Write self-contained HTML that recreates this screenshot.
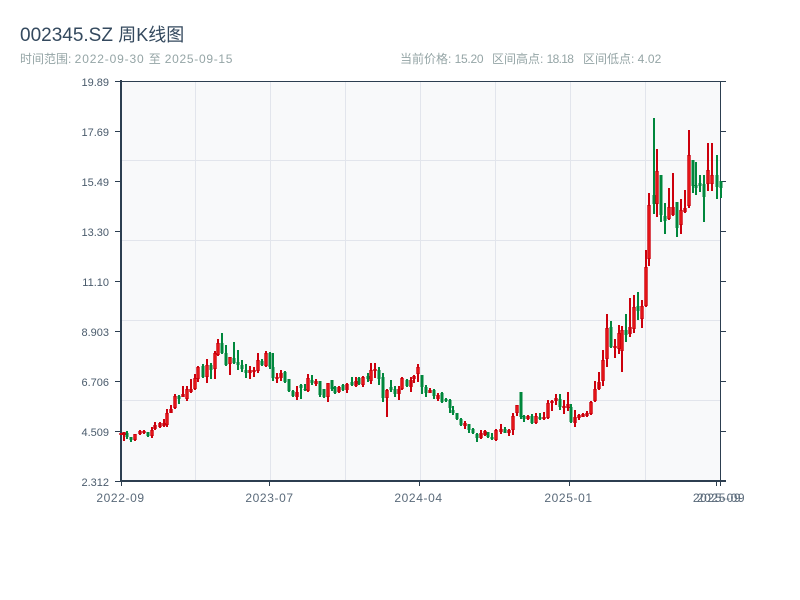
<!DOCTYPE html>
<html lang="zh">
<head>
<meta charset="utf-8">
<title>002345.SZ 周K线图</title>
<style>
html,body{margin:0;padding:0;background:#fff}
body{width:800px;height:600px;overflow:hidden;position:relative;font-family:"Liberation Sans","Noto Sans CJK SC",sans-serif}
svg{position:absolute;left:0;top:0}
text{font-family:"Liberation Sans","Noto Sans CJK SC",sans-serif}
.t{position:absolute;white-space:pre;line-height:1}
.sub{font-size:12px;color:#95a5a6;top:53px}
</style>
</head>
<body>
<div class="t" style="left:20px;top:26px;font-size:18px;color:#34495e"><span style="font-size:19px">002345.SZ </span>周K线图</div>
<div class="t sub" style="left:20px">时间范围: <span style="letter-spacing:.85px">2022-09-30 </span>至<span style="letter-spacing:.7px"> 2025-09-15</span></div>
<div class="t sub" style="left:400px">当前价格: <span style="letter-spacing:-.3px">15.20</span></div>
<div class="t sub" style="left:492px">区间高点: <span style="letter-spacing:-.7px">18.18</span></div>
<div class="t sub" style="left:583px">区间低点: <span style="letter-spacing:.1px">4.02</span></div>
<svg width="800" height="600" viewBox="0 0 800 600">
<rect x="121" y="81" width="600" height="400" fill="#f8f9fa"/>
<path d="M195.5 81V481M270.5 81V481M345.5 81V481M420.5 81V481M495.5 81V481M570.5 81V481M645.5 81V481M121 160.5H721M121 240.5H721M121 320.5H721M121 400.5H721" stroke="#e2e5ec" stroke-width="1" fill="none"/>
<g fill="none" stroke="#2c3e50">
<path d="M121 80V482M121 481H726" stroke-width="2"/>
<path d="M121 81.5H726M720.5 81V481" stroke-width="1"/>
<path d="M115 81.5H121M115 131.5H121M115 181.5H121M115 231.5H121M115 281.5H121M115 331.5H121M115 381.5H121M115 431.5H121M115 481.5H121M721 131.5H726M721 181.5H726M721 231.5H726M721 281.5H726M721 331.5H726M721 381.5H726M721 431.5H726M121.5 481V486M269.5 481V486M419.5 481V486M569.5 481V486M716.5 481V486M720.5 481V486" stroke-width="1"/>
</g>
<!-- green wicks -->
<path fill="none" stroke="#00873c" stroke-width="2" d="M127 431V439M131 437V442M148 432V437M179 395V404M203 364V378M211 363V379M222 333V354M226 345V366M234 342V364M238 350V370M242 360V372M246 364V378M262 359V366M270 352V369M273 353V381M285 371V383M289 379V392M293 390V397M301 384V399M305 384V391M312 375V385M320 381V397M324 389V398M332 380V391M335 386V394M343 384V391M352 377V386M359 377V385M368 373V382M379 367V385M383 373V402M391 380V392M395 386V397M407 379V387M422 375V394M426 385V397M434 389V399M442 392V403M446 398V402M450 399V413M453 406V415M457 413V420M461 418V426M469 424V433M473 428V434M477 433V442M488 432V438M492 433V440M505 427V433M521 392V419M524 415V422M532 414V424M540 413V420M560 394V410M571 404V423M611 321V348M626 314V342M638 292V320M654 118V214M661 175V222M665 203V234M677 202V237M693 160V193M696 162V195M700 175V192M704 175V222M717 155V199M721 181V198"/>
<!-- green bodies -->
<path fill="none" stroke="#00873c" stroke-width="3" d="M127 433V437M131 437V440M148 432V436M179 396V399M203 366V377M211 365V370M222 343V353M226 353V365M234 358V363M238 362V365M242 365V369M246 370V373M262 361V365M270 353V367M273 367V378M285 372V382M289 379V391M293 391V396M301 385V388M305 389V390M312 380V383M320 381V395M324 389V397M332 380V389M335 387V393M343 385V390M352 382V385M359 378V384M368 376V379M379 370V379M383 377V398M391 387V390M395 389V394M407 380V386M422 375V387M426 387V393M434 390V396M442 393V402M446 399V401M450 400V408M453 410V413M457 413V419M461 419V425M469 424V430M473 429V433M477 434V438M488 432V437M492 437V439M505 429V433M521 392V417M524 416V419M532 416V423M540 417V419M560 399V407M571 407V422M611 327V347M626 330V335M638 306V311M654 195V204M661 175V215M665 216V221M677 202V228M693 160V186M696 185V188M700 183V186M704 184V197M717 175V187M721 181V188"/>
<!-- red wicks -->
<path fill="none" stroke="#cc000c" stroke-width="2" d="M121 433V435M124 432V441M135 434V441M140 430V435M144 430V434M152 427V438M155 422V430M160 422V428M164 419V427M167 409V427M171 405V413M175 394V409M183 386V397M187 386V401M191 379V393M195 374V390M198 366V382M207 359V383M215 351V379M218 339V356M230 357V375M250 366V379M254 367V377M258 353V373M266 351V367M277 373V383M281 370V381M297 386V400M308 374V392M316 379V386M328 383V402M339 386V393M347 383V393M356 377V387M363 376V387M371 363V384M375 363V378M387 389V417M399 386V400M402 377V390M411 377V392M414 375V383M418 364V382M430 388V393M438 393V401M465 421V429M481 430V439M485 430V436M496 429V441M501 424V434M509 429V436M513 413V435M517 405V416M528 415V420M536 413V424M544 412V420M548 400V419M552 400V411M556 394V405M564 400V414M568 392V411M575 410V427M579 414V420M583 413V417M587 411V417M591 401V415M595 381V402M599 372V390M603 350V386M607 314V367M615 339V358M619 325V354M622 326V372M630 298V337M634 295V333M642 300V328M646 250V307M649 193V266M657 149V217M669 188V220M673 173V216M681 199V234M685 190V213M689 130V208M708 143V191M712 143V191"/>
<!-- red bodies -->
<path fill="none" stroke="#cc000c" stroke-width="3.4" d="M121 433V435M124 432V435M135 434V440M140 431V434M144 431V433M152 430V436M155 425V429M160 423V427M164 423V426M167 413V425M171 409V413M175 396V408M183 394V397M187 389V399M191 389V392M195 378V389M198 367V379M207 365V377M215 353V369M218 343V355M230 357V364M250 370V373M254 370V372M258 360V371M266 353V366M277 377V379M281 373V378M297 392V397M308 378V391M316 381V384M328 383V397M339 387V392M347 384V390M356 381V386M363 377V385M371 370V381M375 369V371M387 390V398M399 389V394M402 378V389M411 380V387M414 376V379M418 367V374M430 390V393M438 395V399M465 423V426M481 433V438M485 431V435M496 430V440M501 429V432M509 430V433M513 416V430M517 405V413M528 416V419M536 416V423M544 417V419M548 403V418M552 401V403M556 398V401M564 406V408M568 404V408M575 417V423M579 415V418M583 414V417M587 413V416M591 402V414M595 389V401M599 382V389M603 360V381M607 328V359M615 346V348M619 333V349M622 330V351M630 327V334M634 307V329M642 306V319M646 267V306M649 205V259M657 171V204M669 207V219M673 207V215M681 210V225M685 208V212M689 155V206M708 170V184M712 175V184"/>
<!-- red body highlight -->
<path fill="none" stroke="#ee1c1c" stroke-width="1.4" d="M135 435V439M152 431V435M167 414V424M175 397V407M187 390V398M195 379V388M198 368V378M207 366V376M215 354V368M218 344V354M230 358V363M258 361V370M266 354V365M308 379V390M328 384V396M363 378V384M371 371V380M387 391V397M402 379V388M418 368V373M496 431V439M513 417V429M517 406V412M536 417V422M548 404V417M591 403V413M595 390V400M603 361V380M607 329V358M619 334V348M622 331V350M634 308V328M642 307V318M646 268V305M649 206V258M657 172V203M669 208V218M681 211V224M689 156V205M708 171V183M712 176V183"/>
<g font-size="11" fill="#4a5b6c" text-anchor="end">
<text x="109" y="86">19.89</text>
<text x="109" y="136">17.69</text>
<text x="109" y="186">15.49</text>
<text x="109" y="236">13.30</text>
<text x="109" y="286">11.10</text>
<text x="109" y="336">8.903</text>
<text x="109" y="386">6.706</text>
<text x="109" y="436">4.509</text>
<text x="109" y="486">2.312</text>
</g>
<g font-size="12" fill="#5a6a7a" text-anchor="middle" letter-spacing=".6">
<text x="120.500" y="502">2022-09</text>
<text x="269.500" y="502">2023-07</text>
<text x="418.500" y="502">2024-04</text>
<text x="568.500" y="502">2025-01</text>
<text x="717" y="502">2025-09</text>
<text x="721" y="502">2025-09</text>
</g>
</svg>
</body>
</html>
